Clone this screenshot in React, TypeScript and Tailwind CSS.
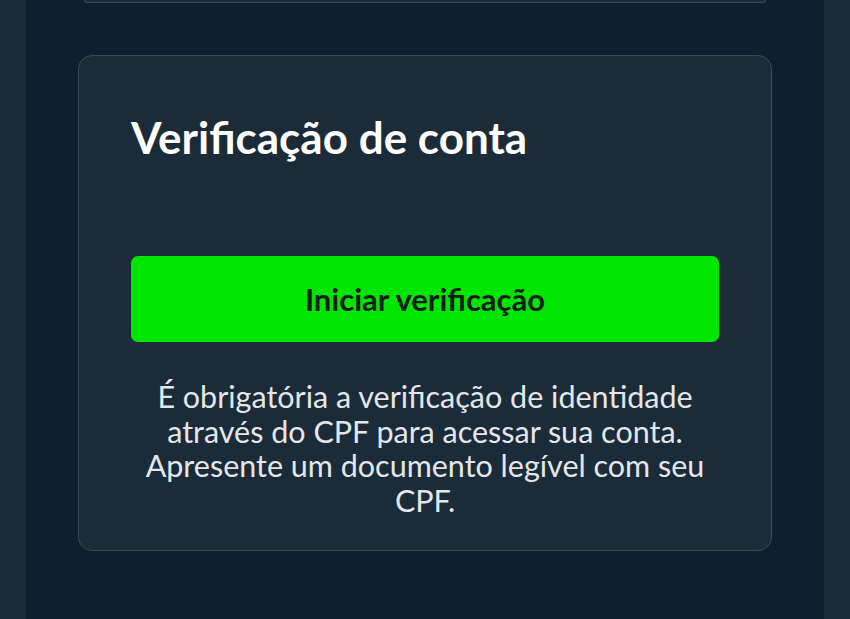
export default function App() {
  return (
    <div className="flex min-h-[619px] bg-[#1b2a36] font-['Lato',sans-serif]">
      <div className="mx-[26px] flex-1 bg-[#0f1f2d] px-[52px]">
        <div className="mx-[6px] h-[3px] rounded-b-[12px] border border-t-0 border-[#3a4a5a] bg-[#1c2b38]" />

        <div className="mt-[52px] rounded-[14px] border border-[#3a4a5a] bg-[#1c2b38] px-[52px] pb-[32px] pt-[57px]">
          <h2 className="text-[44px] font-bold leading-[48px] text-white">
            Verificação de conta
          </h2>

          <button className="mt-[95px] flex h-[86px] w-full items-center justify-center rounded-[7px] bg-[#00e600] text-[31px] font-bold text-[#0e1d18]">
            Iniciar verificação
          </button>

          <p className="mt-[37px] text-center text-[30.5px] leading-[34.7px] text-[#e3e7eb]">
            É obrigatória a verificação de identidade através do CPF para
            acessar sua conta. Apresente um documento legível com seu CPF.
          </p>
        </div>
      </div>
    </div>
  );
}
